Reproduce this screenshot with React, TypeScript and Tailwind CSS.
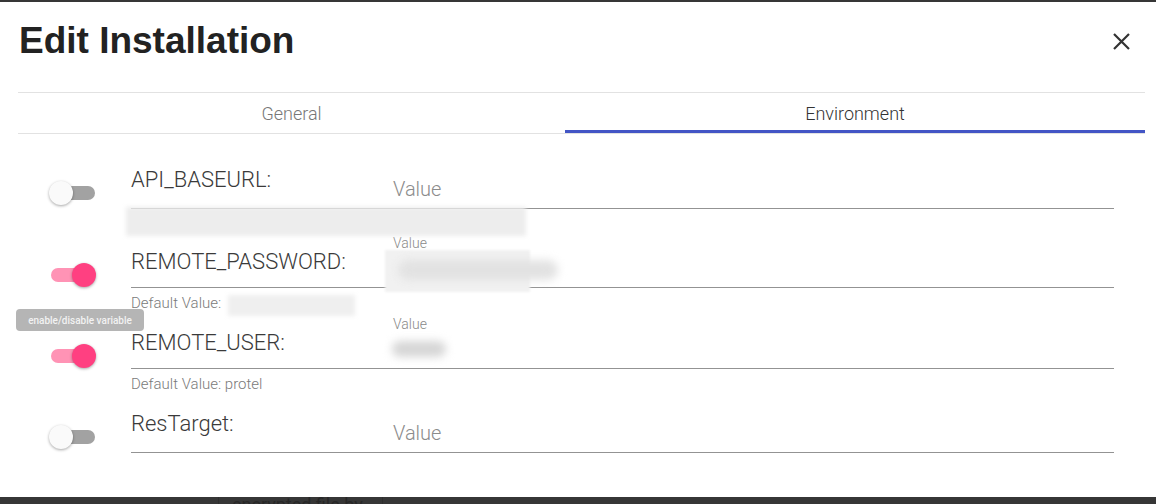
import React from 'react';

type Row = {
  name: string;
  enabled: boolean;
  filled: boolean;
  helper?: string;
};

const rows: Row[] = [
  { name: 'API_BASEURL:', enabled: false, filled: false },
  { name: 'REMOTE_PASSWORD:', enabled: true, filled: true, helper: 'Default Value:' },
  { name: 'REMOTE_USER:', enabled: true, filled: true, helper: 'Default Value: protel' },
  { name: 'ResTarget:', enabled: false, filled: false },
];

const Toggle = ({ on }: { on: boolean }) => (
  <div className="relative w-[47px] h-[24px]">
    <div
      className={`absolute top-[5px] left-[3px] w-[44px] h-[14px] rounded-full ${
        on ? 'bg-[#ff93b5]' : 'bg-[#a2a2a2]'
      }`}
    />
    <div
      className={`absolute top-0 w-[24px] h-[24px] rounded-full shadow-[0_1px_3px_rgba(0,0,0,0.35)] ${
        on ? 'left-[24px] bg-[#ff4081]' : 'left-[1px] bg-[#fafafa]'
      }`}
    />
  </div>
);

const EnvRow = ({ row, first }: { row: Row; first: boolean }) => (
  <div className={`flex ${first ? 'h-[82px]' : 'h-[81px]'}`}>
    <div className="w-[83px] pt-[33px]">
      <Toggle on={row.enabled} />
    </div>
    <div className="flex-1 flex flex-col">
      <div className="flex h-[61px] border-b border-[#939393]">
        <div className="w-[254px] pt-[20px] text-[22px] leading-[24px] font-light text-[#3a3a3a]">{row.name}</div>
        <div className="flex-1 pl-[8px] relative">
          {row.filled ? (
            <div className="pt-[5px] text-[14px] leading-[16px] font-light text-[#8a8a8a]">Value</div>
          ) : (
            <div className="pt-[29px] text-[20px] leading-[24px] font-light text-[#8c8c8c]">Value</div>
          )}
        </div>
      </div>
      {row.helper && (
        <div className="pt-[7px] text-[15px] leading-[16px] font-light text-[#7a7a7a]">{row.helper}</div>
      )}
    </div>
  </div>
);

export default function App() {
  return (
    <div
      className="w-[1156px] h-[504px] bg-[#363636] overflow-hidden flex flex-col"
      style={{ fontFamily: 'Roboto, "Liberation Sans", sans-serif' }}
    >
      <div className="mt-[2px] h-[495px] bg-white relative">
        <div className="h-[90px] flex items-start justify-between pl-[19px] pr-[26px] pt-[20px]">
          <h1
            className="text-[37px] leading-none font-bold text-[#222]"
            style={{ fontFamily: '"Liberation Sans", Arial, sans-serif' }}
          >
            Edit Installation
          </h1>
          <button className="mt-[11px] text-[#333]">
            <svg width="17" height="17" viewBox="0 0 17 17" fill="none" stroke="currentColor" strokeWidth="2.2">
              <path d="M1 1L16 16M16 1L1 16" />
            </svg>
          </button>
        </div>

        <div className="mx-[18px] mr-[11px] h-[42px] flex border-t border-b border-[#e2e2e2]">
          <div className="w-[547px] flex items-center justify-center pt-[1px] text-[18px] font-light text-[#777]">
            General
          </div>
          <div className="flex-1 relative flex items-center justify-center pt-[1px] text-[18px] font-light text-[#333]">
            Environment
            <div className="absolute left-0 right-0 bottom-0 h-[3px] bg-[#4355c5]" />
          </div>
        </div>

        <div className="pt-[14px] pl-[48px] pr-[42px]">
          {rows.map((r, i) => (
            <EnvRow key={r.name} row={r} first={i === 0} />
          ))}
        </div>

        {/* redacted values */}
        <div className="absolute left-[126px] top-[205px] w-[400px] h-[29px] bg-[#ededed] blur-[2px]" />
        <div className="absolute left-[385px] top-[248px] w-[145px] h-[42px] bg-[#f1f1f1] blur-[1px]" />
        <div className="absolute left-[398px] top-[258px] w-[160px] h-[20px] rounded-full bg-[#e2e2e2] blur-[4px]" />
        <div className="absolute left-[228px] top-[293px] w-[127px] h-[21px] bg-[#efefef] blur-[2px]" />
        <div className="absolute left-[392px] top-[339px] w-[54px] h-[16px] rounded-full bg-[#d6d6d6] blur-[4px]" />

        <div className="absolute left-[16px] top-[307px] w-[128px] h-[22px] rounded-[4px] bg-[#b5b5b5] flex items-center justify-center text-[10px] font-medium text-[#f2f2f2]">
          enable/disable variable
        </div>
      </div>

      <div className="flex-1 relative">
        <div className="absolute left-[218px] top-0 w-[165px] h-[10px] border-l border-r border-[#2e2e2e]" />
        <div className="absolute left-[232px] top-[-1px] text-[18px] leading-none text-[#272727] whitespace-nowrap">
          encrypted file by
        </div>
      </div>
    </div>
  );
}
